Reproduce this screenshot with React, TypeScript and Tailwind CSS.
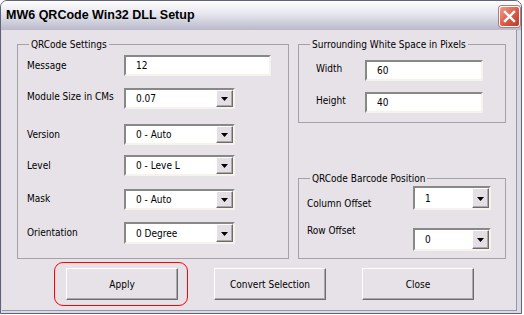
import React from 'react'

type Row = {
    label: string
    value: string
    kind: 'input' | 'select'
    rowClass: string
    labelClass?: string
    boxClass: string
}

// left group rows, spacing taken from the dialog
const settingsRows: Row[] = [
    { label: 'Message', value: '12', kind: 'input', rowClass: 'mt-[4px]', boxClass: 'w-[147px] h-[21px]' },
    { label: 'Module Size in CMs', value: '0.07', kind: 'select', rowClass: 'mt-[12px]', labelClass: '-mt-[5px]', boxClass: 'w-[111px] h-[21px]' },
    { label: 'Version', value: '0 - Auto', kind: 'select', rowClass: 'mt-[15px]', boxClass: 'w-[111px] h-[21px]' },
    { label: 'Level', value: '0 - Leve L', kind: 'select', rowClass: 'mt-[10px]', boxClass: 'w-[111px] h-[21px]' },
    { label: 'Mask', value: '0 - Auto', kind: 'select', rowClass: 'mt-[13px]', labelClass: '-mt-[3px]', boxClass: 'w-[111px] h-[21px]' },
    { label: 'Orientation', value: '0 Degree', kind: 'select', rowClass: 'mt-[12px]', labelClass: '-mt-[2px]', boxClass: 'w-[111px] h-[22px]' },
]

const Arrow = () => (
    <svg width="7" height="4" viewBox="0 0 7 4">
        <polygon points="0,0 7,0 3.5,4" fill="#000" />
    </svg>
)

const TextBox = ({ value, boxClass }: { value: string, boxClass: string }) => (
    <div className={`flex items-center bg-white border-2 border-t-[#888888] border-l-[#888888] border-r-[#f6f2ec] border-b-[#f6f2ec] pl-[10px] ${boxClass}`}>
        {value}
    </div>
)

const Select = ({ value, boxClass }: { value: string, boxClass: string }) => (
    <div className={`flex bg-white border-2 border-t-[#888888] border-l-[#888888] border-r-[#f6f2ec] border-b-[#f6f2ec] ${boxClass}`}>
        <span className="flex-1 flex items-center pl-[10px]">{value}</span>
        <span className="w-[17px] flex items-center justify-center pt-[1px] bg-[#e3dfe5] border border-t-white border-l-white border-r-[#6c6c6c] border-b-[#6c6c6c] shadow-[inset_-1px_-1px_0_#a9a9ad]">
            <Arrow />
        </span>
    </div>
)

// group box: legend sits on the top line, body padding kept off the fieldset
const Group = ({ title, className, bodyClass, children }: { title: string, className: string, bodyClass: string, children: React.ReactNode }) => (
    <fieldset className={`border border-[#a3a2aa] ${className}`}>
        <legend className="ml-[11px] px-[2px] leading-[13px]">{title}</legend>
        <div className={bodyClass}>{children}</div>
    </fieldset>
)

const Button = ({ label }: { label: string }) => (
    <div className="w-[112px] h-[32px] flex items-center justify-center border border-t-white border-l-white border-r-[#6d6d6d] border-b-[#6d6d6d] shadow-[inset_-1px_-1px_0_#a8a8ac]">
        {label}
    </div>
)

export default function App() {
    return (
        <div className="w-[524px] h-[315px] bg-white font-['DejaVu_Sans_Condensed','DejaVu_Sans',sans-serif] text-[10px] text-black">
            <div className="w-[522px] h-[314px] flex flex-col border border-[#62627a] rounded-t-[7px] bg-[#d9d9e4] overflow-hidden">
                {/* title bar */}
                <div className="h-[29px] shrink-0 flex items-center justify-between pl-[5px] pr-[1px] bg-gradient-to-b from-[#ffffff] via-[#e2e2eb] to-[#b9b9ca]">
                    <span className="font-['Liberation_Sans',Arial,sans-serif] text-[12.5px] font-bold">MW6 QRCode Win32 DLL Setup</span>
                    <div className="w-[21px] h-[21px] mt-[1px] rounded-[3px] border border-white bg-gradient-to-br from-[#ef9c8c] via-[#dc5f4b] to-[#bb3625] flex items-center justify-center shadow-[0_0_0_1px_#b77a74]">
                        <svg width="13" height="13" viewBox="0 0 13 13">
                            <path d="M2 2 L11 11 M11 2 L2 11" stroke="#fff" strokeWidth="2.4" strokeLinecap="square" />
                        </svg>
                    </div>
                </div>

                {/* client area */}
                <div className="flex-1 ml-[1px] mr-[4px] mb-[2px] flex flex-col pl-[15px] pt-[8px] bg-[#e7e2e8] border-r border-b border-[#9696aa]">
                    <div className="flex gap-[9px]">
                        <Group title="QRCode Settings" className="w-[272px] h-[221px]" bodyClass="pl-[9px]">
                            {settingsRows.map(row => (
                                <div key={row.label} className={`flex items-center ${row.rowClass}`}>
                                    <span className={`w-[97px] whitespace-nowrap leading-[13px] ${row.labelClass ?? ''}`}>{row.label}</span>
                                    {row.kind === 'input'
                                        ? <TextBox value={row.value} boxClass={row.boxClass} />
                                        : <Select value={row.value} boxClass={row.boxClass} />}
                                </div>
                            ))}
                        </Group>

                        <div className="w-[208px] h-[221px] flex flex-col justify-between">
                            <Group title="Surrounding White Space in Pixels" className="h-[85px]" bodyClass="pl-[17px]">
                                <div className="flex items-center mt-[9px]">
                                    <span className="w-[49px] leading-[13px] -mt-[4px]">Width</span>
                                    <TextBox value="60" boxClass="w-[118px] h-[21px]" />
                                </div>
                                <div className="flex items-center mt-[11px]">
                                    <span className="w-[49px] leading-[13px] -mt-[4px]">Height</span>
                                    <TextBox value="40" boxClass="w-[118px] h-[21px]" />
                                </div>
                            </Group>

                            <Group title="QRCode Barcode Position" className="h-[87px]" bodyClass="pl-[8px]">
                                <div className="flex items-start mt-[1px]">
                                    <span className="w-[106px] leading-[13px] mt-[11px]">Column Offset</span>
                                    <Select value="1" boxClass="w-[78px] h-[24px]" />
                                </div>
                                <div className="flex items-start mt-[18px]">
                                    <span className="w-[106px] leading-[13px] -mt-[4px]">Row Offset</span>
                                    <Select value="0" boxClass="w-[78px] h-[23px]" />
                                </div>
                            </Group>
                        </div>
                    </div>

                    {/* buttons */}
                    <div className="flex gap-[36px] mt-[9px] pl-[49px]">
                        <div className="relative">
                            <Button label="Apply" />
                            <div className="absolute -left-[12px] -right-[10px] -top-[6px] -bottom-[6px] rounded-[9px] border border-[#ff0000] pointer-events-none" />
                        </div>
                        <Button label="Convert Selection" />
                        <Button label="Close" />
                    </div>
                </div>
            </div>
        </div>
    )
}
